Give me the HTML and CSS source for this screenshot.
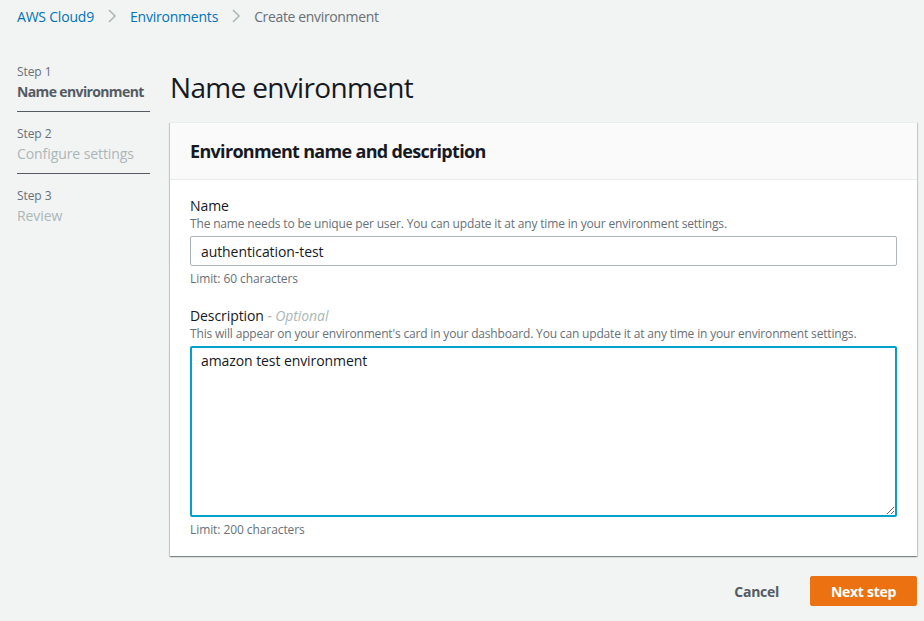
FILE: index.html
```html
<!DOCTYPE html>
<html lang="en">
<head>
<meta charset="utf-8">
<title>Create environment</title>
<link rel="stylesheet" href="styles.css">
</head>
<body>
<div class="page">
  <nav class="breadcrumb">
    <a class="crumb-link" href="#">AWS Cloud9</a>
    <svg class="chev" width="16" height="16" viewBox="0 0 16 16"><polyline points="5,2 11,8 5,14" fill="none" stroke="#aab7b8" stroke-width="1.5"/></svg>
    <a class="crumb-link" href="#">Environments</a>
    <svg class="chev" width="16" height="16" viewBox="0 0 16 16"><polyline points="5,2 11,8 5,14" fill="none" stroke="#aab7b8" stroke-width="1.5"/></svg>
    <span class="crumb-current">Create environment</span>
  </nav>

  <div class="layout">
    <ul class="steps">
      <li class="step">
        <div class="step-num">Step 1</div>
        <div class="step-title active">Name environment</div>
      </li>
      <li class="step">
        <div class="step-num">Step 2</div>
        <div class="step-title">Configure settings</div>
      </li>
      <li class="step last">
        <div class="step-num">Step 3</div>
        <div class="step-title">Review</div>
      </li>
    </ul>

    <main class="content">
      <h1 class="page-title">Name environment</h1>
      <section class="card">
        <header class="card-header">
          <h2 class="card-title">Environment name and description</h2>
        </header>
        <div class="card-body">
          <div class="field">
            <label class="field-label">Name</label>
            <div class="field-help">The name needs to be unique per user. You can update it at any time in your environment settings.</div>
            <input class="text-input" type="text" value="authentication-test">
            <div class="field-hint">Limit: 60 characters</div>
          </div>
          <div class="field second">
            <label class="field-label">Description <span class="optional">- Optional</span></label>
            <div class="field-help">This will appear on your environment's card in your dashboard. You can update it at any time in your environment settings.</div>
            <textarea class="text-area">amazon test environment</textarea>
            <div class="field-hint">Limit: 200 characters</div>
          </div>
        </div>
      </section>
      <div class="actions">
        <button class="btn-link">Cancel</button>
        <button class="btn-primary">Next step</button>
      </div>
    </main>
  </div>
</div>
</body>
</html>
```

FILE: styles.css
```css
* { box-sizing: border-box; }

html, body {
  margin: 0;
  padding: 0;
  background: #f2f3f3;
}

body {
  font-family: "Open Sans", "Noto Sans", sans-serif;
  color: #16191f;
  letter-spacing: -0.005em;
}

.page {
  padding: 0 7px 0 17px;
}

.breadcrumb {
  display: flex;
  align-items: center;
  height: 32px;
  font-size: 14px;
}

.crumb-link {
  color: #0073bb;
  text-decoration: none;
  letter-spacing: -0.015em;
}

.crumb-current {
  color: #687078;
  letter-spacing: -0.025em;
}

.chev {
  margin: 0 10px;
  display: block;
}

.layout {
  display: grid;
  grid-template-columns: 133px 747px;
  column-gap: 20px;
  margin-top: 32px;
}

.steps {
  list-style: none;
  margin: 0;
  padding: 0;
}

.step {
  padding-bottom: 9px;
  border-bottom: 1px solid #545b64;
  margin-bottom: 14px;
}

.step.last {
  border-bottom: none;
}

.step-num {
  font-size: 12px;
  line-height: 16px;
  color: #687078;
}

.step-title {
  margin-top: 2px;
  font-size: 14px;
  line-height: 20px;
  color: #aab7b8;
}

.step-title.active {
  color: #545b64;
  font-weight: 700;
  letter-spacing: -0.045em;
}

.content {
  min-width: 0;
}

.page-title {
  margin: 0;
  padding-top: 5px;
  font-size: 28px;
  line-height: 36px;
  font-weight: 400;
  letter-spacing: -0.024em;
  color: #16191f;
}

.card {
  margin-top: 17px;
  background: #ffffff;
  border-top: 1px solid #eaeded;
  box-shadow: 0 1px 1px 0 rgba(0, 28, 36, 0.3), 1px 1px 1px 0 rgba(0, 28, 36, 0.15), -1px 1px 1px 0 rgba(0, 28, 36, 0.15);
}

.card-header {
  background: #fafafa;
  border-bottom: 1px solid #eaeded;
  padding: 17px 20px 17px;
}

.card-title {
  margin: 0;
  font-size: 18px;
  line-height: 22px;
  font-weight: 700;
  letter-spacing: -0.038em;
}

.card-body {
  padding: 16px 20px 18px;
}

.field-label {
  display: block;
  font-size: 14px;
  line-height: 20px;
  color: #16191f;
}

.optional {
  font-style: italic;
  color: #aab7b8;
}

.field-help {
  font-size: 12px;
  line-height: 16px;
  color: #687078;
  letter-spacing: -0.014em;
}

.text-input {
  display: block;
  width: 100%;
  height: 30px;
  margin-top: 4px;
  padding: 0 10px;
  border: 1px solid #aab7b8;
  border-radius: 2px;
  background: #ffffff;
  font-family: inherit;
  letter-spacing: inherit;
  font-size: 14px;
  color: #16191f;
  outline: none;
}

.field-hint {
  margin-top: 5px;
  font-size: 12px;
  line-height: 16px;
  color: #687078;
}

.field.second {
  margin-top: 19px;
}

.text-area {
  display: block;
  width: 100%;
  height: 171px;
  margin-top: 4px;
  padding: 3px 9px;
  border: 2px solid #00a1c9;
  border-radius: 2px;
  background: #ffffff;
  font-family: inherit;
  letter-spacing: inherit;
  font-size: 14px;
  line-height: 20px;
  color: #16191f;
  outline: none;
  resize: vertical;
}

.actions {
  display: flex;
  justify-content: flex-end;
  align-items: center;
  margin-top: 20px;
}

.btn-link {
  background: none;
  border: none;
  font-family: inherit;
  letter-spacing: -0.02em;
  font-size: 14px;
  font-weight: 700;
  color: #545b64;
  padding: 4px 20px;
  margin-right: 11px;
}

.btn-primary {
  width: 107px;
  height: 30px;
  background: #ec7211;
  border: 1px solid #ec7211;
  border-radius: 2px;
  color: #ffffff;
  font-family: inherit;
  letter-spacing: -0.02em;
  font-size: 14px;
  font-weight: 700;
  padding: 0;
}
```
